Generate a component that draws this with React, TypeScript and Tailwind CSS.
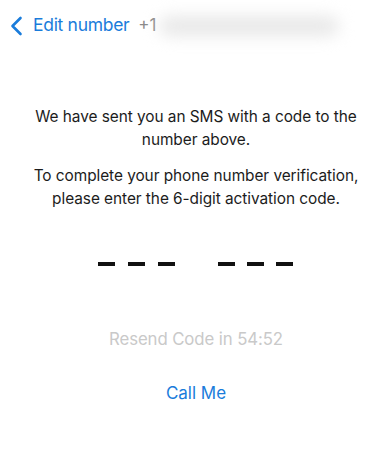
export default function App() {
  const dash = "w-[17px] h-[4px] bg-[#111]";
  return (
    <div className="w-[384px] h-[450px] bg-white relative overflow-hidden" style={{ fontFamily: "Inter, 'Liberation Sans', sans-serif" }}>
      <div className="flex items-center h-[48px] pl-[10px] pt-[3px]">
        <svg width="13" height="20" viewBox="0 0 13 20" className="mr-[10px]">
          <path d="M10.5 2 L2.5 10 L10.5 18" fill="none" stroke="#1a7cdb" strokeWidth="2.6" strokeLinecap="round" strokeLinejoin="round" />
        </svg>
        <span className="text-[17.5px] text-[#1a7cdb] tracking-[-0.3px]">Edit number</span>
        <span className="ml-[9px] text-[17px] text-[#8a8a8a]">+1</span>
        <div className="ml-[2px] w-[180px] h-[20px] rounded-full bg-[#e8e8e8] blur-[8px]" />
      </div>
      <div className="pl-[8px] mt-[58px] text-center text-[15.4px] leading-[22.5px] text-[#1c1c1c] tracking-[-0.05px]">
        <p>We have sent you an SMS with a code to the<br />number above.</p>
        <p className="mt-[14px]">To complete your phone number verification,<br />please enter the 6-digit activation code.</p>
      </div>
      <div className="flex justify-center mt-[52px] pl-[6px]">
        <div className="flex gap-[13px]">
          <div className={dash} /><div className={dash} /><div className={dash} />
        </div>
        <div className="flex gap-[12px] ml-[43px]">
          <div className={dash} /><div className={dash} /><div className={dash} />
        </div>
      </div>
      <div className="pl-[8px] mt-[61px] text-center text-[16.8px] text-[#c9c9c9] tracking-[-0.1px]">Resend Code in 54:52</div>
      <div className="pl-[8px] mt-[29px] text-center text-[17px] text-[#1a7cdb]">Call Me</div>
    </div>
  );
}
